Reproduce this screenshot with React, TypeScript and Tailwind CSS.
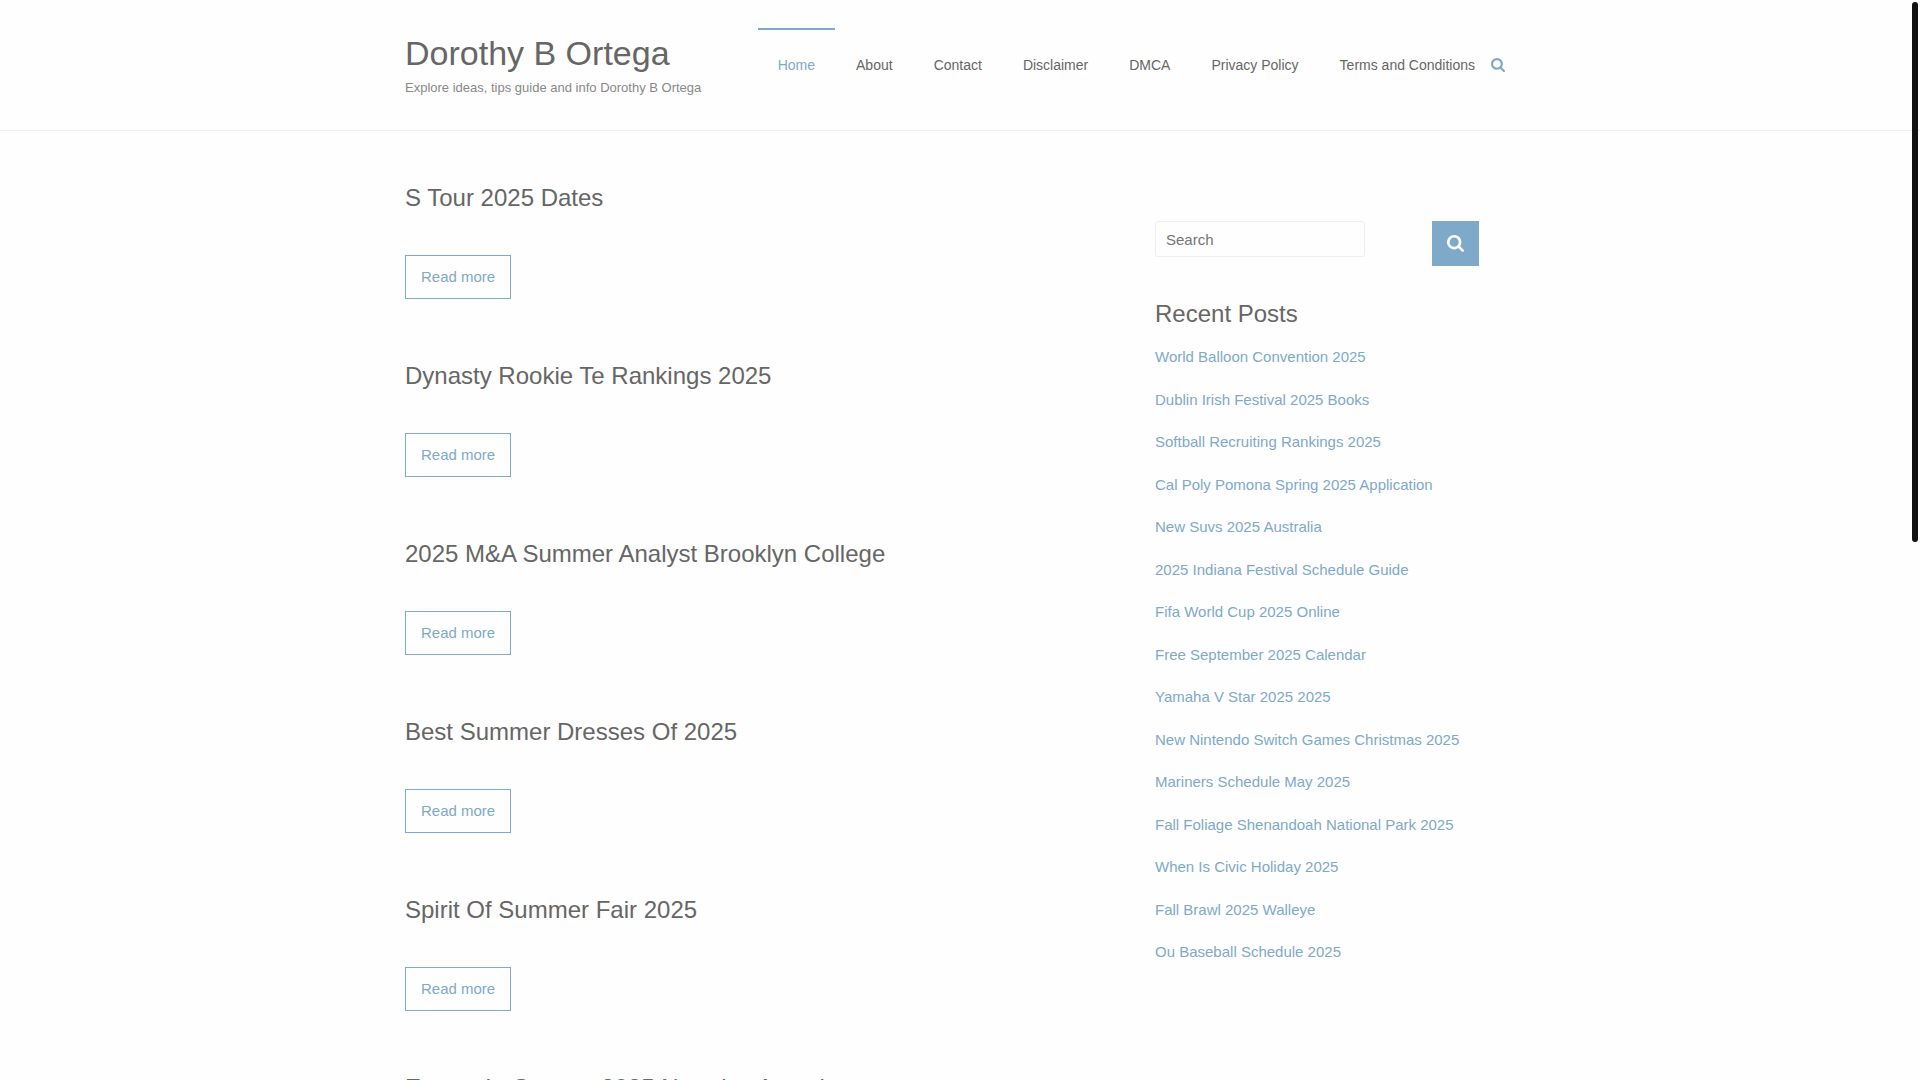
import { useState } from "react";

const menuItems = [
  "Home",
  "About",
  "Contact",
  "Disclaimer",
  "DMCA",
  "Privacy Policy",
  "Terms and Conditions",
];

const posts = [
  "S Tour 2025 Dates",
  "Dynasty Rookie Te Rankings 2025",
  "2025 M&A Summer Analyst Brooklyn College",
  "Best Summer Dresses Of 2025",
  "Spirit Of Summer Fair 2025",
  "Events In Cancun 2025 Newsies Award",
];

const recentPosts = [
  "World Balloon Convention 2025",
  "Dublin Irish Festival 2025 Books",
  "Softball Recruiting Rankings 2025",
  "Cal Poly Pomona Spring 2025 Application",
  "New Suvs 2025 Australia",
  "2025 Indiana Festival Schedule Guide",
  "Fifa World Cup 2025 Online",
  "Free September 2025 Calendar",
  "Yamaha V Star 2025 2025",
  "New Nintendo Switch Games Christmas 2025",
  "Mariners Schedule May 2025",
  "Fall Foliage Shenandoah National Park 2025",
  "When Is Civic Holiday 2025",
  "Fall Brawl 2025 Walleye",
  "Ou Baseball Schedule 2025",
];

function SearchIcon({ className }: { className: string }) {
  return (
    <svg viewBox="0 0 1664 1664" fill="currentColor" className={className} aria-hidden="true">
      <path d="M1152 704q0-185-131.500-316.500T704 256 387.500 387.500 256 704t131.500 316.500T704 1152t316.500-131.500T1152 704zm512 832q0 52-38 90t-90 38q-54 0-90-38l-343-342q-179 124-399 124-143 0-273.500-55.500t-225-150-150-225T0 704t55.500-273.500 150-225 225-150T704 0t273.500 55.500 225 150 150 225T1408 704q0 220-124 399l343 343q37 37 37 90z" />
    </svg>
  );
}

function Header() {
  return (
    <header className="border-b border-[#eeeeee]">
      <div className="mx-auto flex max-w-[1110px] items-start justify-between pr-[10px] pt-7 pb-[31px]">
        <div className="pt-1">
          <h1 className="text-[34px] leading-[42px] text-[#666666]">
            <a href="#">Dorothy B Ortega</a>
          </h1>
          <p className="mt-[3px] text-[13px] leading-[22px] text-[#888888]">
            Explore ideas, tips guide and info Dorothy B Ortega
          </p>
        </div>
        <nav className="flex items-start">
          <ul className="flex gap-px">
            {menuItems.map((item) => (
              <li key={item}>
                <a
                  href="#"
                  className={
                    item === "Home"
                      ? "block border-t-2 border-[#7fa9c9] px-5 pt-[25px] pb-6 text-sm text-[#7fa9c9]"
                      : "block border-t-2 border-transparent px-5 pt-[25px] pb-6 text-sm text-[#666666]"
                  }
                >
                  {item}
                </a>
              </li>
            ))}
          </ul>
          <button type="button" aria-label="Open search" className="-ml-1 mt-[30px] text-[#7fa9c9]">
            <SearchIcon className="h-[14px] w-[14px]" />
          </button>
        </nav>
      </div>
    </header>
  );
}

function Sidebar() {
  const [query, setQuery] = useState("");

  return (
    <aside className="w-[324px] pt-10">
      <form className="flex items-start justify-between" onSubmit={(e) => e.preventDefault()}>
        <input
          type="text"
          aria-label="Search"
          placeholder="Search"
          value={query}
          onChange={(e) => setQuery(e.target.value)}
          className="h-9 w-[210px] rounded-[3px] border border-[#eeeeee] px-[10px] text-[15px] text-[#666666] placeholder:text-[#757575]"
        />
        <button
          type="submit"
          aria-label="Submit search"
          className="flex h-[45px] w-[47px] items-center justify-center bg-[#7fa9c9] text-white"
        >
          <SearchIcon className="h-[17px] w-[17px]" />
        </button>
      </form>
      <h3 className="mt-8 text-2xl text-[#666666]">Recent Posts</h3>
      <ul className="mt-4 flex flex-col gap-5">
        {recentPosts.map((title) => (
          <li key={title} className="text-[15px] leading-normal">
            <a href="#" className="text-[#7fa9c9]">
              {title}
            </a>
          </li>
        ))}
      </ul>
    </aside>
  );
}

export default function App() {
  return (
    <div className="h-screen overflow-hidden bg-[#fefefe] font-['Liberation_Sans',Arial,sans-serif]">
      <Header />
      <div className="mx-auto flex max-w-[1110px] items-start justify-between pr-9 pt-[50px]">
        <main>
          {posts.map((title) => (
            <article key={title} className="mb-[60px]">
              <h2 className="text-2xl leading-[33px] text-[#666666]">
                <a href="#">{title}</a>
              </h2>
              <a
                href="#"
                className="mt-[41px] inline-block border border-[#7fa9c9] px-[15px] py-[10px] text-[15px] leading-[22px] text-[#7fa9c9]"
              >
                Read more
              </a>
            </article>
          ))}
        </main>
        <Sidebar />
      </div>
      {/* scroll thumb */}
      <div className="fixed right-[2px] top-[2px] h-1/2 w-[6px] rounded-full bg-[#111111]" />
    </div>
  );
}
